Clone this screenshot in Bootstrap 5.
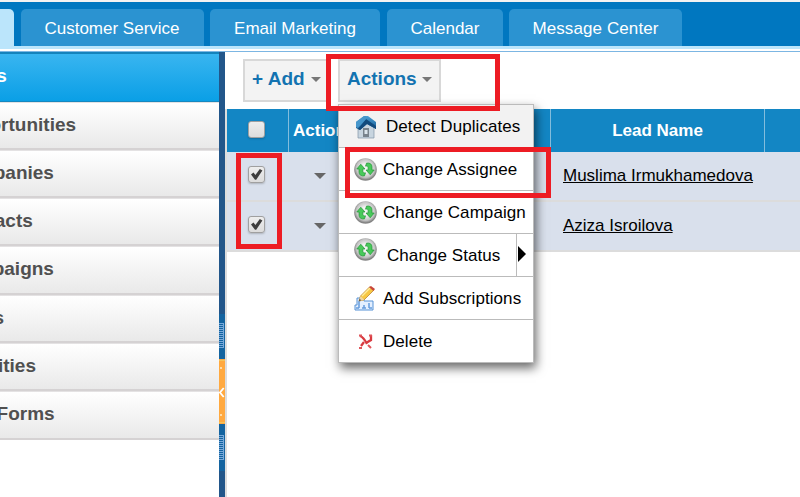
<!DOCTYPE html>
<html lang="en">
<head>
<meta charset="utf-8">
<meta name="viewport" content="width=device-width, initial-scale=1">
<title>Leads</title>
<link href="https://cdn.jsdelivr.net/npm/bootstrap@5.3.0/dist/css/bootstrap.min.css" rel="stylesheet">
<style>
body{font-family:"Liberation Sans",Arial,sans-serif;font-size:17px;line-height:20px;color:#000;background:#fff}
.topbar{height:49px;background:#0077c0;border-top:2px solid #f2f2f2;border-bottom:3px solid #bbe5fb;padding-top:7px}
.topbar .nav-link{height:37px;padding:0;line-height:39px;text-align:center;color:#fff;background:#2b93d1;border-radius:5px 5px 0 0}
.topbar .nav-link.active{width:14px;background:#bbe5fb;border-radius:0 5px 0 0}
.topbar .t-service{width:183px;margin-left:7px;padding-right:1px}
.t-email{width:170px;margin-left:6px}
.t-cal{width:116px;margin-left:7px}
.topbar .t-msg{width:173px;margin-left:6px;letter-spacing:.1px}
.rule{height:3px;border-bottom:1px solid #7cb6e3}
.workspace{height:445px}
.side{width:268px;margin-left:-49px}
.side a{display:block;height:48.3px;line-height:44px;font-size:19px;font-weight:bold;color:#505050;text-decoration:none;background:linear-gradient(#fff,#e9e9e9);border-bottom:2px solid #d5d2d3;border-top:1px solid #e4e2e3;padding-left:.5px}
.side a.current{height:49.5px;line-height:43px;padding-left:1px;color:#fff;background:linear-gradient(#39b5f0,#0a9fe6);border-top:2px solid #1583bc;border-bottom:1px solid #1688c0}
.splitter{width:6px;background:#22568a;padding-top:262px}
.toolbar-row{height:57px;padding:7px 0 0 18px}
.tool{height:43px;padding:0 7px 3px;border:2px solid #d8d8d8;border-radius:0;background:#f3f3f3;color:#1373b1;font-weight:bold;font-size:19px;line-height:36px}
.tool:hover{background:#f3f3f3;border-color:#d8d8d8;color:#1373b1}
.tool-add{width:87px}
.tool-act{width:103px;margin-left:8px}
.tri{width:0;height:0;border:5px solid transparent;border-top-color:#777;border-bottom:0}
.grid-wrap{border-left:2px solid #ddd;height:388px}
.leads{width:573px;table-layout:fixed;border-collapse:separate;border-spacing:0}
.leads th{height:43px;padding:0;background:#1386c4;color:#fff;text-align:center;vertical-align:middle;border-right:1px solid #83bddd}
.leads th:last-child{border-right:0}
.leads td{height:50px;padding:0;background:#d9e0ec;vertical-align:middle;border-bottom:2px solid #dcdcdc}
.leads th.text-start{padding-left:4px}
.leads td.name-cell{padding-left:12px}
.leads a{color:#000}
.row-tri{margin:0 0 1px 25px;border-width:6px 6px 0;border-top-color:#666}
.box{display:block;width:17px;height:17px;margin-left:21px;border:1px solid #a0a0a0;border-radius:3px;background:linear-gradient(#eee,#dcdcdc);box-shadow:0 1px 2px #0003}
.leads th .box{margin-bottom:2px}
.leads td .box{margin-bottom:3px}
.action-menu{left:338px;top:104px;width:196px;height:259px;background:#fff;border:1px solid #bbb;box-shadow:2px 5px 10px #0009;z-index:5}
.action-menu .entry{height:43px;border-bottom:1px solid #bbb;padding-left:15px;white-space:nowrap}
.action-menu .entry:last-child{height:42px;border:0}
.action-menu .entry.hot{background:#f2f2f2}
.entry svg{flex:none;margin-right:6px}
.entry>span:not(.submenu){padding-top:2px;letter-spacing:.07px}
.entry.hot svg{margin:2px 8px 0 0}
.entry .swap-icon{margin-top:1px}
.entry .raised{margin:0 8px 12px 0}
.status-label{padding-left:2px}
.submenu{width:17px;height:42px;border-left:1px solid #bbb;padding-left:1px;padding-bottom:3px}
.arrow{border:8px solid transparent;border-left-color:#000;border-right:0}
.callout{border:5px solid #ed1c24;z-index:9;pointer-events:none}
.c-actions{left:326px;top:54px;width:174px;height:57px}
.c-assign{left:345px;top:147px;width:206px;height:51px}
.c-checks{left:236px;top:153px;width:46px;height:96px}
</style>
<script src="https://cdn.jsdelivr.net/npm/bootstrap@5.3.0/dist/js/bootstrap.bundle.min.js"></script>
</head>
<body class="position-relative overflow-hidden">
<svg width="0" height="0" class="position-absolute">
<defs>
<radialGradient id="silver" cy=".45"><stop offset=".35" stop-color="#f4f4f4"/><stop offset=".8" stop-color="#c4c4c4"/><stop offset="1" stop-color="#858585"/></radialGradient>
<linearGradient id="roof" x2="0" y2="1"><stop stop-color="#4aa0d5"/><stop offset="1" stop-color="#13558d"/></linearGradient>
<symbol id="swap" viewBox="0 0 22 22"><circle cx="11" cy="11" r="10.8" fill="url(#silver)"/><g fill="#48c95a" stroke="#27963a" stroke-width=".7"><path d="M6.500 6 2.700 10.500h2.100v3c0 2.600 2 4.200 5.200 3.600l1-2.900c-1.600.2-2.500-.2-2.500-1.500v-2.200h2Z"/><path d="m15.500 16 3.800-4.500h-2.100v-3c0-2.600-2-4.200-5.200-3.600l-1 2.900c1.600-.2 2.500.2 2.500 1.500v2.200h-2Z"/></g></symbol>
<symbol id="tick" viewBox="0 0 15 15"><path d="m2 7.500 2.500-1.900L6.400 8 10.800 2l2.600 1.600L7.200 12.700H6Z" fill="#3d3d3d"/></symbol>
</defs>
</svg>
<nav class="topbar nav flex-nowrap">
<a class="nav-link active" href="#" aria-label="Leads"></a>
<a class="nav-link t-service" href="#">Customer Service</a>
<a class="nav-link t-email" href="#">Email Marketing</a>
<a class="nav-link t-cal" href="#">Calendar</a>
<a class="nav-link t-msg" href="#">Message Center</a>
</nav>
<div class="rule"></div>
<div class="workspace d-flex">
<aside class="side flex-shrink-0">
<a class="current" href="#">Leads</a><a href="#">Opportunities</a><a href="#">Companies</a><a href="#">Contacts</a><a href="#">Campaigns</a><a href="#">Tasks</a><a href="#">Activities</a><a href="#">Web Forms</a>
</aside>
<div class="splitter flex-shrink-0">
<svg class="d-block" width="6" height="157" viewBox="0 0 6 157"><path fill="#1464a0" d="M0 0h6v157H0z"/><path fill="#ffa940" d="M0 45h6v65H0z"/><path stroke="#f4c45a" d="M0 46.500h6M0 108.500h6"/><path stroke="#78a9da" stroke-width="4" stroke-dasharray="1 1" d="M2 9v25M2 121v25"/><path stroke="#78a9da" d="M4.500 9v25M4.500 121v25"/><path d="M4.700 74 1 78.500l3.700 4.500" fill="none" stroke="#fff" stroke-width="1.800"/><path d="M1 53h2v2H1zm0 47h2v2H1z" fill="#ffdca8"/></svg>
</div>
<main class="flex-grow-1">
<div class="toolbar-row d-flex">
<button class="btn tool tool-add d-flex align-items-center justify-content-between"><span>+ Add</span><i class="tri"></i></button>
<button class="btn tool tool-act d-flex align-items-center justify-content-between"><span>Actions</span><i class="tri"></i></button>
</div>
<div class="grid-wrap">
<table class="leads">
<colgroup><col style="width:62px"><col style="width:262px"><col style="width:214px"><col></colgroup>
<thead><tr><th><span class="box"></span></th><th class="text-start">Actions</th><th>Lead Name</th><th></th></tr></thead>
<tbody>
<tr><td><span class="box"><svg class="d-block" width="15" height="15"><use href="#tick"/></svg></span></td><td><i class="tri d-block row-tri"></i></td><td class="name-cell"><a href="#">Muslima Irmukhamedova</a></td><td></td></tr>
<tr><td><span class="box"><svg class="d-block" width="15" height="15"><use href="#tick"/></svg></span></td><td><i class="tri d-block row-tri"></i></td><td class="name-cell"><a href="#">Aziza Isroilova</a></td><td></td></tr>
</tbody>
</table>
</div>
</main>
</div>
<div class="action-menu position-absolute">
<div class="entry hot d-flex align-items-center"><svg width="24" height="24" viewBox="0 0 24 24"><path d="M4 11 12 7l8 4v12H4Z" fill="#c8d5df" stroke="#8396a6" stroke-width=".7"/><path d="M9 13h6v9H9Z" fill="#78838c"/><path d="M10.500 15h3v4h-3Z" fill="#dce6ed"/><path d="M2 7 10 1h4l8 6v7l-9-5-7 6-4-2Z" fill="url(#roof)"/><path d="m12 4 10 7v3l-9-5-7 6-2-1Z" fill="#124b7d"/><path d="M2 7 10 1h2v3L4 13l-2-1Z" fill="#4696cb"/></svg><span>Detect Duplicates</span></div>
<div class="entry d-flex align-items-center"><svg class="swap-icon" width="23" height="23"><use href="#swap"/></svg><span>Change Assignee</span></div>
<div class="entry d-flex align-items-center"><svg class="swap-icon" width="23" height="23"><use href="#swap"/></svg><span>Change Campaign</span></div>
<div class="entry d-flex align-items-center"><svg class="raised" width="23" height="23"><use href="#swap"/></svg><span class="status-label">Change Status</span><span class="submenu d-flex align-items-center ms-auto"><i class="arrow"></i></span></div>
<div class="entry d-flex align-items-center"><svg width="23" height="25" viewBox="0 0 23 25"><path d="M3 12h7v3h9v9H1v-5h2Z" fill="#e3efff" stroke="#5792d5"/><path d="M5 15v7m5-3v3m5-5v5M2 22h3m3 0h4m3 0h3" fill="none" stroke="#659dde" stroke-width="1.500"/><path d="m5 15 1.500-5 9-9 4 3.500-9.500 9.500Z" fill="#f7c744" stroke="#b07a25" stroke-width=".7"/><path d="m8 10 8-8" stroke="#ffec99" stroke-width="1.500"/><path d="m15 1 2-1 4 3-1.500 2Z" fill="#c94639"/><path d="m5 15 1.500-5 4 4Z" fill="#efd5a3"/><path d="m5 15 .6-2 1.600 1.300Z" fill="#333"/></svg><span>Add Subscriptions</span></div>
<div class="entry d-flex align-items-center"><svg width="23" height="23" viewBox="0 0 23 23"><path d="M6 6c3 1 5 4 7 8M17 5v5l-5 3M10 12l-3 4" fill="none" stroke="#d83a40" stroke-width="2.300"/><path d="M5 5.500h3M15 5.500h3M5 18h3m6-3 3 3" stroke="#e0575c" stroke-width="2"/></svg><span>Delete</span></div>
</div>
<div class="callout c-actions position-absolute"></div>
<div class="callout c-assign position-absolute"></div>
<div class="callout c-checks position-absolute"></div>
</body>
</html>
